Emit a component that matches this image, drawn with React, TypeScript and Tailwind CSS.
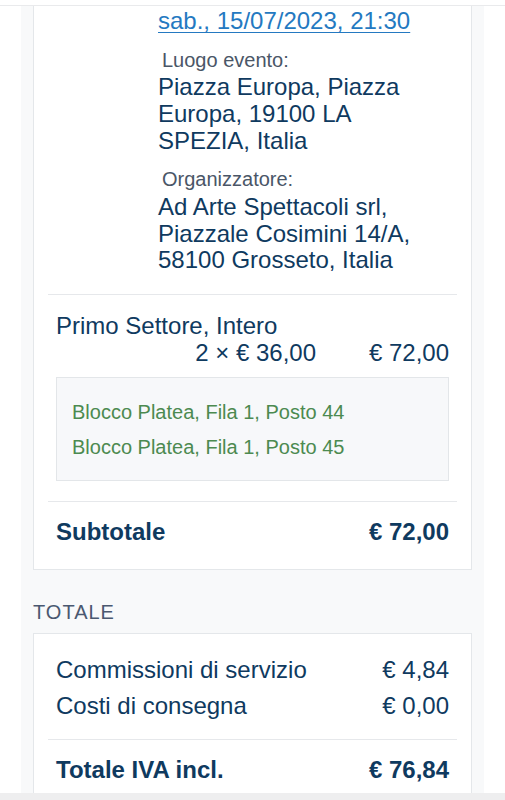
import React from "react";

const seats = ["Blocco Platea, Fila 1, Posto 44", "Blocco Platea, Fila 1, Posto 45"];

const App: React.FC = () => {
  return (
    <div className="h-[800px] w-[505px] overflow-hidden bg-white flex flex-col font-['Liberation_Sans',Arial,sans-serif] text-[#0f3a5f]">
      <div className="h-[6px] shrink-0 border-b border-[#e9eaec]" />
      <div className="flex-1 overflow-hidden mx-[21px] bg-[#f8f9fa] px-[12px]">
        {/* event card */}
        <div className="bg-white border-x border-b border-[#e4e7ea] px-[14px] pt-[2px] pb-[23px]">
          <div className="pl-[110px] pb-[20px]">
            <a href="#" className="block text-[24px] leading-[26.8px] text-[#2479c1] underline decoration-1 underline-offset-[3px]">
              sab., 15/07/2023, 21:30
            </a>
            <div className="mt-[14px] ml-[4px] text-[20px] leading-[22.3px] text-[#4a5667]">Luogo evento:</div>
            <div className="mt-[3px] text-[24px] leading-[26.8px]">
              Piazza Europa, Piazza
              <br />
              Europa, 19100 LA
              <br />
              SPEZIA, Italia
            </div>
            <div className="mt-[14px] ml-[4px] text-[20px] leading-[22.3px] text-[#4a5667]">Organizzatore:</div>
            <div className="mt-[3px] text-[24px] leading-[26.8px]">
              Ad Arte Spettacoli srl,
              <br />
              Piazzale Cosimini 14/A,
              <br />
              58100 Grosseto, Italia
            </div>
          </div>

          <div className="border-t border-[#e6e8eb] pt-[18px] px-[8px]">
            <div className="text-[24px] leading-[26.8px]">Primo Settore, Intero</div>
            <div className="flex justify-end text-[24px] leading-[26.8px]">
              <span>2 × € 36,00</span>
              <span className="w-[133px] text-right">€ 72,00</span>
            </div>
            <div className="mt-[10px] mb-[20px] border border-[#e3e6e9] bg-[#f7f8fa] px-[15px] pt-[17px] pb-[15px]">
              {seats.map((s) => (
                <div key={s} className="text-[20px] leading-[35px] text-[#4c8a50]">
                  {s}
                </div>
              ))}
            </div>
          </div>

          <div className="border-t border-[#e6e8eb] pt-[17px] px-[8px] flex justify-between text-[24px] leading-[26.8px] font-bold">
            <span>Subtotale</span>
            <span>€ 72,00</span>
          </div>
        </div>

        <div className="mt-[31px] text-[20px] leading-[22.3px] tracking-[1px] text-[#4a5870]">TOTALE</div>

        {/* totals card */}
        <div className="mt-[10px] bg-white border border-[#e4e7ea] px-[14px] pt-[23px] pb-[23px]">
          <div className="px-[8px] flex flex-col gap-[9px] text-[24px] leading-[26.8px]">
            <div className="flex justify-between">
              <span>Commissioni di servizio</span>
              <span>€ 4,84</span>
            </div>
            <div className="flex justify-between">
              <span>Costi di consegna</span>
              <span>€ 0,00</span>
            </div>
          </div>
          <div className="mt-[20px] border-t border-[#e6e8eb] pt-[17px] px-[8px] flex justify-between text-[24px] leading-[26.8px] font-bold">
            <span>Totale IVA incl.</span>
            <span>€ 76,84</span>
          </div>
        </div>
      </div>
      <div className="h-[7px] shrink-0 bg-[#eeeeef]" />
    </div>
  );
};

export default App;
